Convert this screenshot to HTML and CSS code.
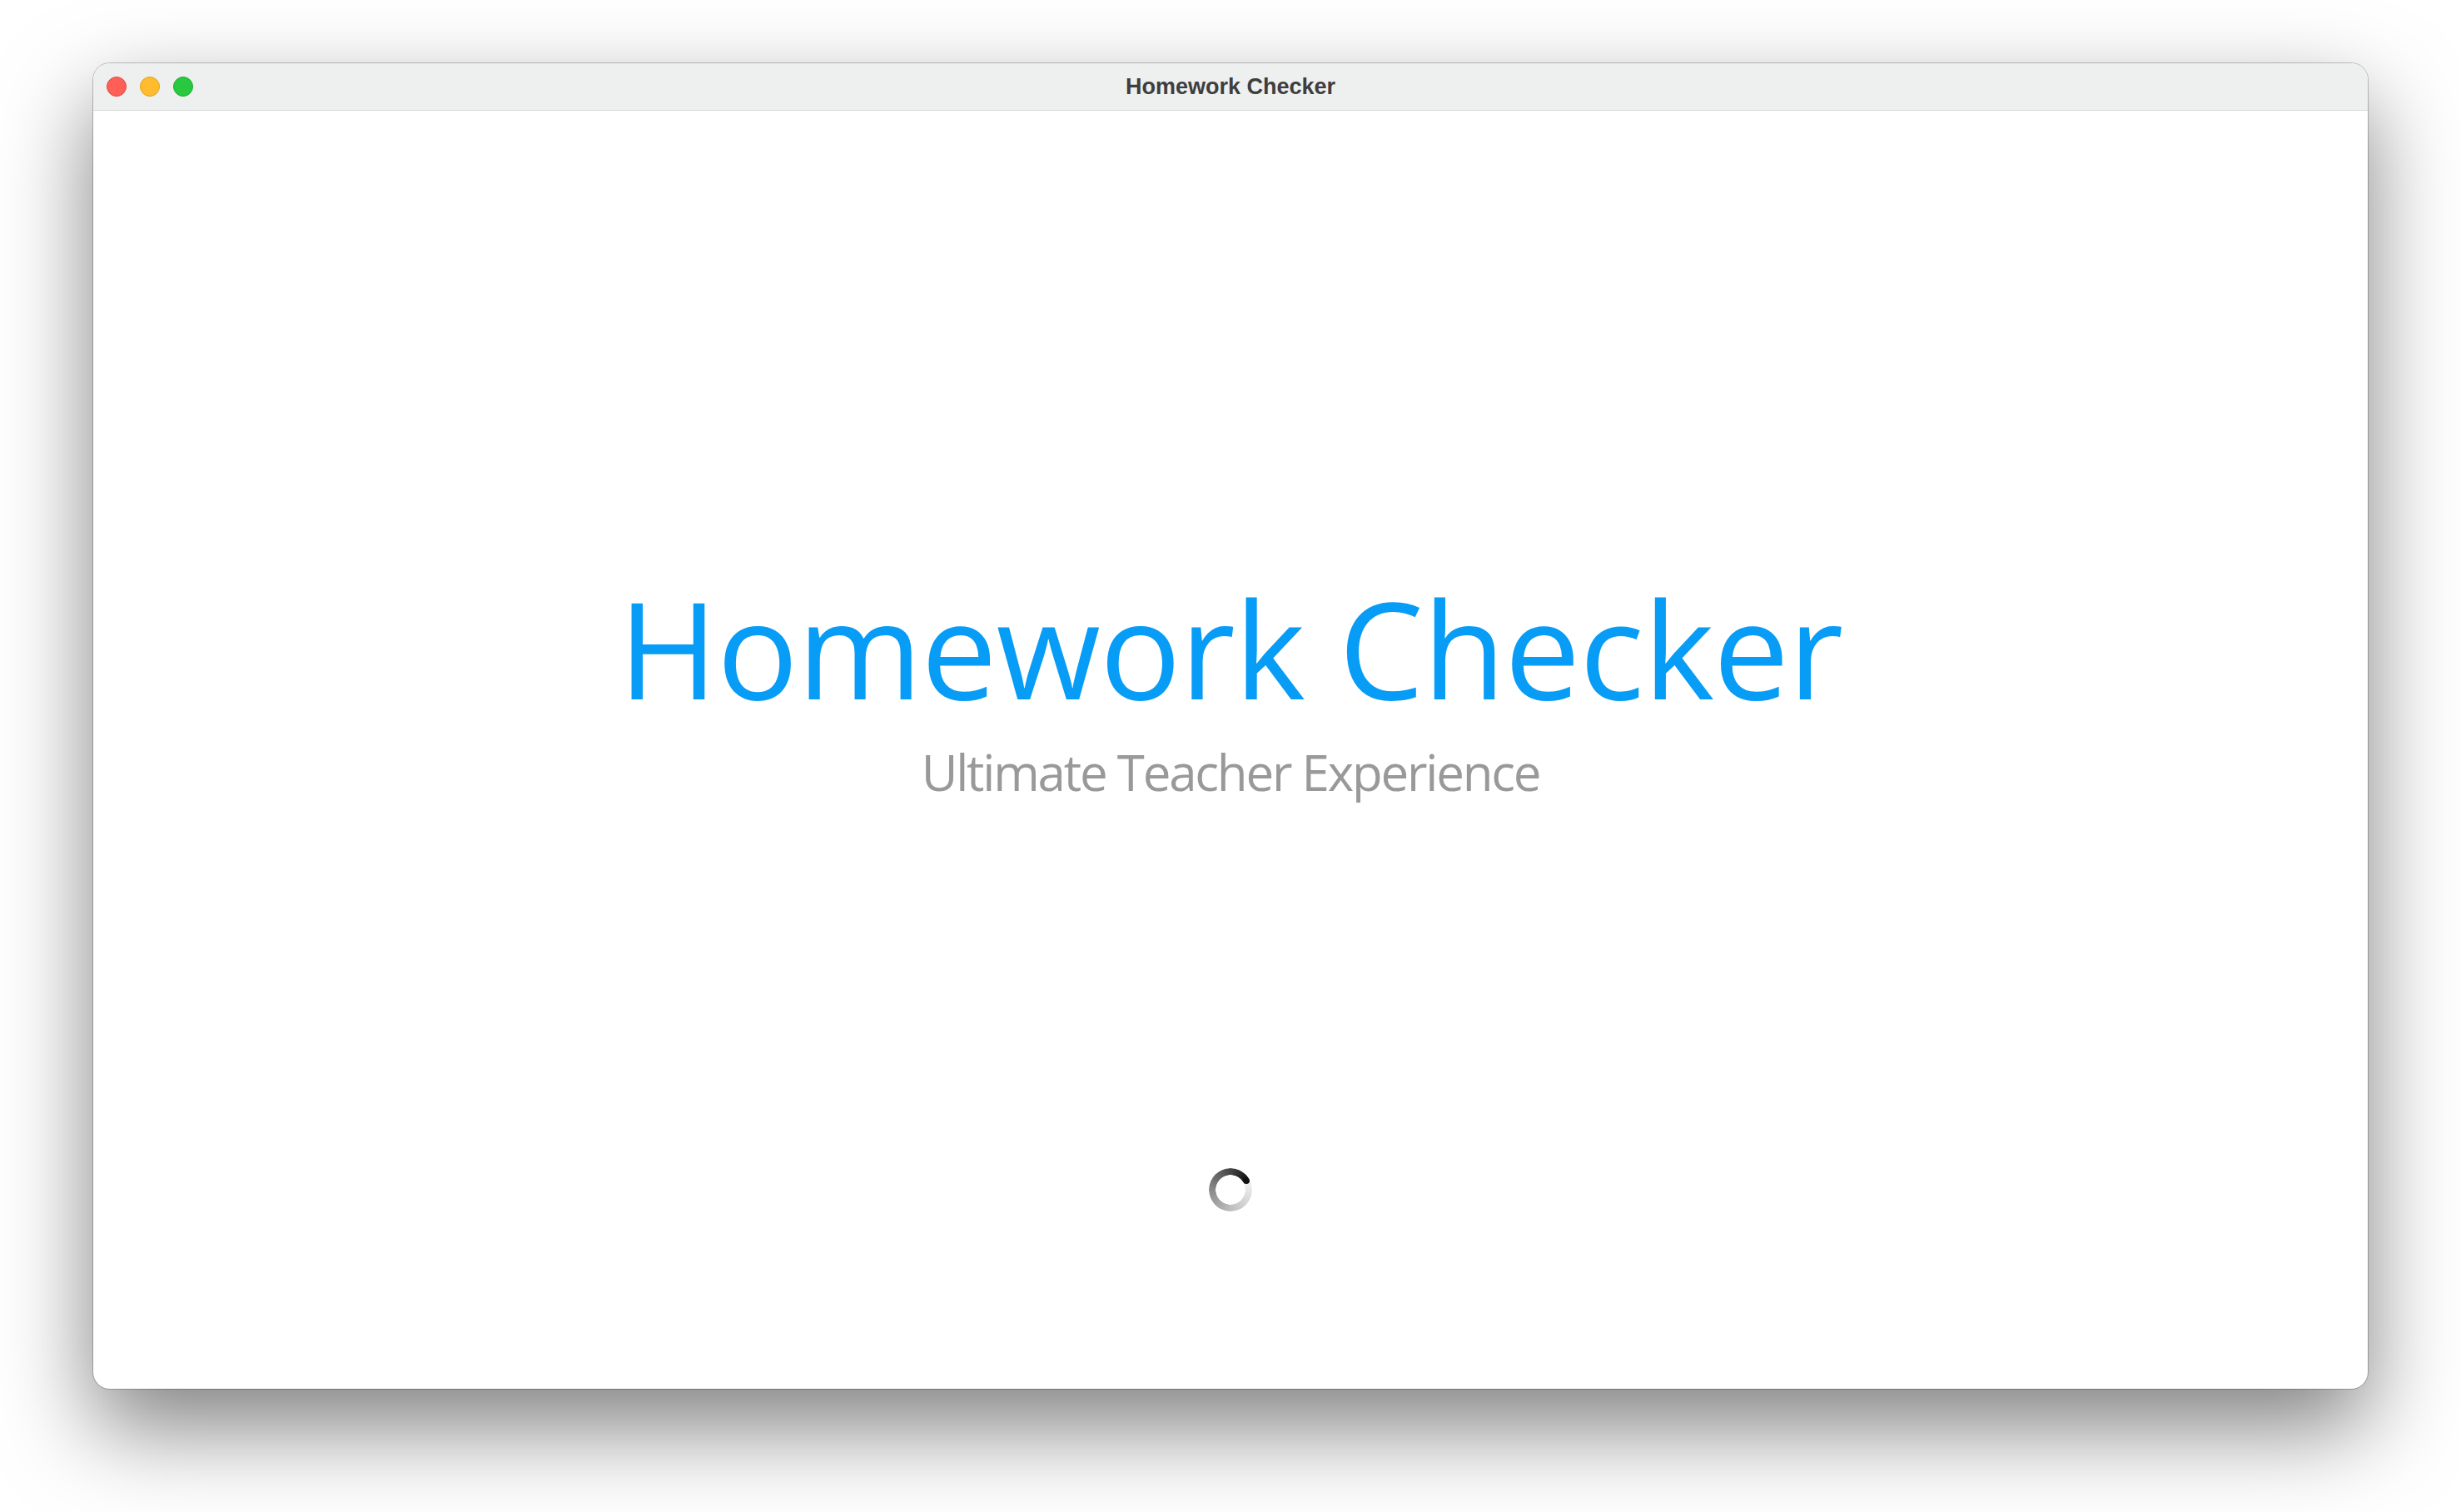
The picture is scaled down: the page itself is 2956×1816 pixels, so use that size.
FILE: index.html
```html
<!DOCTYPE html>
<html lang="en">
<head>
<meta charset="utf-8">
<title>Homework Checker</title>
<link rel="stylesheet" href="styles.css">
</head>
<body>
  <div class="window">
    <div class="titlebar">
      <div class="lights">
        <span class="light red"></span>
        <span class="light yellow"></span>
        <span class="light green"></span>
      </div>
      <div class="window-title">Homework Checker</div>
    </div>
    <main class="content">
      <h1 class="app-title">Homework Checker</h1>
      <p class="app-subtitle">Ultimate Teacher Experience</p>
      <div class="spinner"><span class="spinner-head"></span></div>
    </main>
  </div>
</body>
</html>
```
FILE: styles.css
```css
html, body {
  margin: 0;
  padding: 0;
  background: #ffffff;
}
body {
  padding: 76px 112px 148px;
  box-sizing: border-box;
  width: 2956px;
  height: 1816px;
  overflow: hidden;
}
.window {
  height: 1592px;
  border-radius: 20px;
  background: #ffffff;
  overflow: hidden;
  box-shadow: 0 0 0 1px rgba(0, 0, 0, 0.22), 0 46px 110px rgba(0, 0, 0, 0.5);
  display: flex;
  flex-direction: column;
}
.titlebar {
  position: relative;
  height: 56px;
  flex: 0 0 56px;
  background: #eeefef;
  border-bottom: 1px solid #d6d6d6;
  display: flex;
  align-items: center;
  justify-content: center;
}
.lights {
  position: absolute;
  left: 16px;
  top: 16px;
  display: flex;
  gap: 16px;
}
.light {
  width: 24px;
  height: 24px;
  border-radius: 50%;
  box-sizing: border-box;
}
.red { background: #ff5f57; border: 1px solid #e2463f; }
.yellow { background: #febc2e; border: 1px solid #e1a116; }
.green { background: #28c840; border: 1px solid #1dad2b; }
.window-title {
  font-family: "Liberation Sans", Arial, sans-serif;
  font-weight: 700;
  font-size: 27px;
  color: #3e3e3e;
  line-height: 56px;
}
.content {
  flex: 1;
  display: flex;
  flex-direction: column;
  align-items: center;
  padding-top: 563px;
}
.app-title {
  margin: 0;
  font-family: "Open Sans", sans-serif;
  font-weight: 400;
  font-size: 162px;
  line-height: 162px;
  letter-spacing: -1px;
  color: #079cf6;
}
.app-subtitle {
  margin: 39px 0 0;
  font-family: "Open Sans", sans-serif;
  font-weight: 400;
  font-size: 60px;
  line-height: 60px;
  letter-spacing: -2.2px;
  color: #999999;
}
.spinner {
  position: relative;
  margin-top: 446px;
  width: 52px;
  height: 52px;
  border-radius: 50%;
  background: conic-gradient(from 60deg, #f4f4f4, #c4c4c4 30%, #8a8a8a 58%, #4a4a4a 82%, #111111);
  -webkit-mask: radial-gradient(circle, transparent 17.5px, #000 18px);
  mask: radial-gradient(circle, transparent 17.5px, #000 18px);
}
.spinner-head {
  position: absolute;
  width: 8px;
  height: 8px;
  border-radius: 50%;
  background: #111111;
  left: 41px;
  top: 11px;
}
```
